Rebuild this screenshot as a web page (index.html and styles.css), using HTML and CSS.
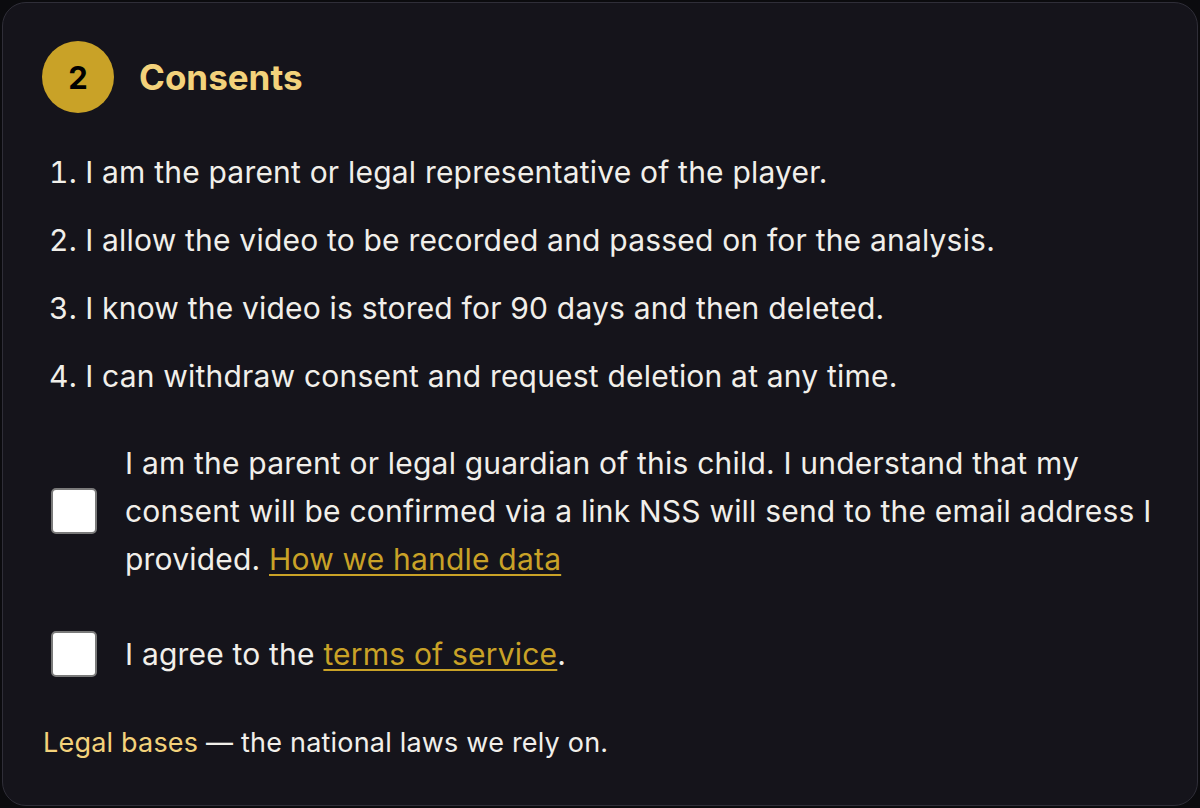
FILE: index.html
```html
<!DOCTYPE html>
<html lang="en">
<head>
  <meta charset="UTF-8" />
  <meta name="viewport" content="width=device-width, initial-scale=1" />
  <title>Consents</title>
  <link rel="stylesheet" href="styles.css">
</head>
<body>
  <section class="card">
    <div class="step-head">
      <span class="step-badge">2</span>
      <h2>Consents</h2>
    </div>
    <ol class="consent-list">
      <li>I am the parent or legal representative of the player.</li>
      <li>I allow the video to be recorded and passed on for the analysis.</li>
      <li>I know the video is stored for 90 days and then deleted.</li>
      <li>I can withdraw consent and request deletion at any time.</li>
    </ol>
    <label class="check-row">
      <input type="checkbox" />
      <span>I am the parent or legal guardian of this child. I understand that my consent will be confirmed via a link NSS will send to the email address I provided. <a href="#">How we handle data</a></span>
    </label>
    <label class="check-row">
      <input type="checkbox" />
      <span>I agree to the <a href="#">terms of service</a>.</span>
    </label>
    <p class="legal"><a href="#">Legal bases</a> — the national laws we rely on.</p>
  </section>
</body>
</html>
```

FILE: styles.css
```css
html,
body {
  margin: 0;
  padding: 0;
  height: 100%;
}
body {
  font-family: Inter, 'Noto Sans', sans-serif;
  background: #0b0b0e;
  color: #f1efea;
  padding: 2px;
  box-sizing: border-box;
}
.card {
  box-sizing: border-box;
  height: 804px;
  background: #15141b;
  border: 1px solid #2f2e38;
  border-radius: 24px;
  padding: 38px 30px 38px 39px;
}
.step-head {
  display: flex;
  align-items: center;
  gap: 25px;
}
.step-badge {
  width: 72px;
  height: 72px;
  border-radius: 50%;
  background: #c9a227;
  color: #000;
  font-weight: 700;
  font-size: 31px;
  display: flex;
  align-items: center;
  justify-content: center;
}
.step-head h2 {
  margin: 0;
  font-size: 35px;
  font-weight: 700;
  color: #f3d27b;
}
.consent-list {
  list-style-position: inside;
  margin: 39px 0 0;
  padding: 0 0 0 7px;
  display: flex;
  flex-direction: column;
  gap: 28px;
  font-size: 30px;
  line-height: 40px;
  letter-spacing: 0.2px;
}
.check-row {
  display: flex;
  align-items: center;
  gap: 28px;
  margin-top: 43px;
  padding-left: 9px;
  font-size: 30px;
  line-height: 48px;
  letter-spacing: 0.2px;
}
.check-row + .check-row {
  margin-top: 47px;
}
.check-row input {
  appearance: none;
  flex: none;
  width: 46px;
  height: 46px;
  margin: 0;
  background: #fff;
  border: 2px solid #7a7a7a;
  border-radius: 5px;
}
a {
  color: #c9a227;
  text-decoration: underline;
  text-underline-offset: 4px;
  text-decoration-thickness: 2px;
}
.legal {
  margin: 47px 0 0 1px;
  font-size: 27px;
  line-height: 36px;
  letter-spacing: 0.2px;
}
.legal a {
  color: #f3d27b;
  text-decoration: none;
}
```
